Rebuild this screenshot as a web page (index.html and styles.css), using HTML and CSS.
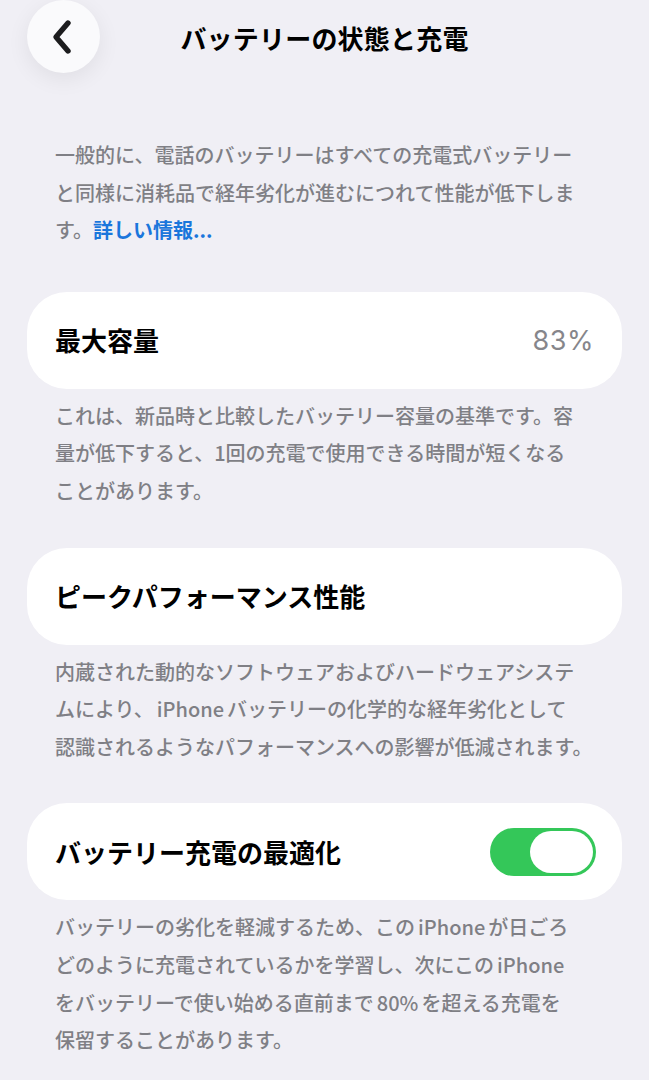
FILE: index.html
```html
<!DOCTYPE html>
<html lang="ja">
<head>
<meta charset="utf-8">
<title>バッテリーの状態と充電</title>
<link rel="stylesheet" href="styles.css">
</head>
<body>
<div class="page">
  <header class="nav">
    <div class="nav-left">
      <button class="back" aria-label="戻る">
        <svg width="22" height="36" viewBox="0 0 22 36"><polyline points="17,4 5,18 17,32" fill="none" stroke="#1c1c1e" stroke-width="5.4" stroke-linecap="round" stroke-linejoin="round"/></svg>
      </button>
    </div>
    <h1 class="title">バッテリーの状態と充電</h1>
    <div class="nav-right"></div>
  </header>

  <p class="note intro">一般的に、電話のバッテリーはすべての充電式バッテリー<br>と同様に消耗品で経年劣化が進むにつれて性能が低下しま<br>す。<a class="link" href="#">詳しい情報...</a></p>

  <section class="group">
    <div class="card">
      <span class="label">最大容量</span>
      <span class="value">83%</span>
    </div>
    <p class="note">これは、新品時と比較したバッテリー容量の基準です。容<br>量が低下すると、1回の充電で使用できる時間が短くなる<br>ことがあります。</p>
  </section>

  <section class="group">
    <div class="card">
      <span class="label">ピークパフォーマンス性能</span>
    </div>
    <p class="note">内蔵された動的なソフトウェアおよびハードウェアシステ<br>ムにより、<span class="latin">iPhone</span>バッテリーの化学的な経年劣化として<br>認識されるようなパフォーマンスへの影響が低減されます。</p>
  </section>

  <section class="group">
    <div class="card">
      <span class="label">バッテリー充電の最適化</span>
      <span class="toggle on"><span class="knob"></span></span>
    </div>
    <p class="note">バッテリーの劣化を軽減するため、この<span class="latin">iPhone</span>が日ごろ<br>どのように充電されているかを学習し、次にこの<span class="latin">iPhone</span><br>をバッテリーで使い始める直前まで<span class="latin">80%</span>を超える充電を<br>保留することがあります。</p>
  </section>
</div>
</body>
</html>
```

FILE: styles.css
```css
* { box-sizing: border-box; }

html, body {
  margin: 0;
  padding: 0;
  background: #f0eff5;
}

body {
  font-family: "Noto Sans CJK JP", "Noto Sans", sans-serif;
  color: #000;
}

.page {
  width: 649px;
  min-height: 1080px;
  overflow: hidden;
}

.nav {
  display: grid;
  grid-template-columns: 1fr auto 1fr;
  align-items: center;
  height: 74px;
}

.nav-left {
  padding-left: 27px;
  display: flex;
  align-items: flex-start;
  height: 74px;
}

.back {
  width: 73px;
  height: 73px;
  border-radius: 50%;
  border: none;
  padding: 0 4px 0 0;
  background: #fafafc;
  box-shadow: 0 6px 22px rgba(0, 0, 0, 0.07);
  display: flex;
  align-items: center;
  justify-content: center;
}

.title {
  margin: 0;
  font-size: 26px;
  font-weight: 700;
  line-height: 1;
  padding-top: 2px;
  letter-spacing: 0.2px;
}

.note {
  margin: 8px 0 0;
  padding: 0 20px 0 55px;
  font-size: 20px;
  font-weight: 500;
  line-height: 37.6px;
  color: #7f7f85;
  white-space: nowrap;
}

.latin {
  margin: 0 3px;
}

.intro {
  margin-top: 62px;
  margin-bottom: 43px;
}

.link {
  color: #1a76dc;
  text-decoration: none;
  font-weight: 700;
}

.group {
  margin-bottom: 38px;
}

.card {
  margin: 0 27px;
  height: 97px;
  background: #fff;
  border-radius: 40px;
  display: flex;
  align-items: center;
  justify-content: space-between;
  padding: 0 26px 0 28px;
}

.label {
  font-size: 26px;
  font-weight: 700;
  line-height: 1;
}

.value {
  font-family: "Inter", "Noto Sans", sans-serif;
  font-size: 27px;
  color: #86868b;
  letter-spacing: 0.5px;
  padding-right: 2px;
}

.toggle {
  width: 106px;
  height: 48px;
  border-radius: 24px;
  background: #34c759;
  display: flex;
  align-items: center;
  justify-content: flex-end;
  padding: 0 3px;
}

.knob {
  width: 63px;
  height: 42px;
  border-radius: 21px;
  background: #fff;
}
```
